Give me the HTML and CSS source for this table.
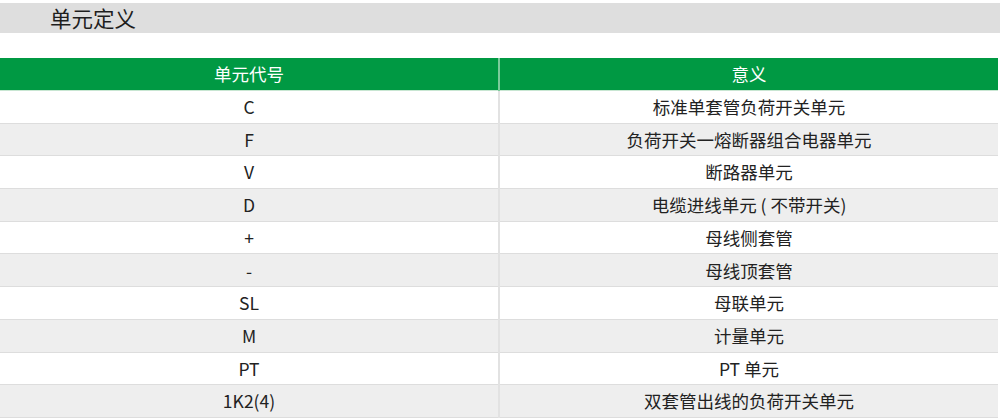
FILE: index.html
```html
<!DOCTYPE html>
<html lang="zh-CN">
<head>
<meta charset="utf-8">
<link rel="stylesheet" href="styles.css">
</head>
<body>
<div class="title-bar"><h2 class="title">单元定义</h2></div>
<table class="units">
  <thead>
    <tr><th>单元代号</th><th>意义</th></tr>
  </thead>
  <tbody>
    <tr><td>C</td><td>标准单套管负荷开关单元</td></tr>
    <tr><td>F</td><td>负荷开关一熔断器组合电器单元</td></tr>
    <tr><td>V</td><td>断路器单元</td></tr>
    <tr><td>D</td><td>电缆进线单元 ( 不带开关)</td></tr>
    <tr><td>+</td><td>母线侧套管</td></tr>
    <tr><td>-</td><td>母线顶套管</td></tr>
    <tr><td>SL</td><td>母联单元</td></tr>
    <tr><td>M</td><td>计量单元</td></tr>
    <tr><td>PT</td><td>PT 单元</td></tr>
    <tr><td>1K2(4)</td><td>双套管出线的负荷开关单元</td></tr>
  </tbody>
</table>
</body>
</html>
```

FILE: styles.css
```css
html, body {
  margin: 0;
  padding: 0;
  background: #ffffff;
}
body {
  font-family: "Noto Sans CJK SC", "Noto Sans", sans-serif;
  color: #222222;
  padding-top: 3px;
}
.title-bar {
  background: #dedede;
  height: 30px;
  display: flex;
  align-items: center;
  padding-left: 50px;
}
.title {
  margin: 0;
  font-size: 21.5px;
  font-weight: 400;
  color: #1e1e1e;
  line-height: 1;
}
.units {
  margin-top: 25px;
  width: 998px;
  border-collapse: collapse;
  table-layout: fixed;
}
.units th,
.units td {
  text-align: center;
  padding: 0;
  font-size: 17.5px;
  font-weight: 400;
  line-height: 1;
}
.units th {
  background: #009943;
  color: #ffffff;
  height: 32px;
  border-bottom: 1px solid #c8e6d2;
}
.units th + th {
  border-left: 2px solid #7ccb9b;
}
.units td {
  height: 31.7px;
  border-bottom: 1px solid #dddddd;
  color: #222222;
}
.units td + td {
  border-left: 2px solid #e2e2e2;
}
.units tbody tr:nth-child(even) td {
  background: #eeeeee;
}
```
